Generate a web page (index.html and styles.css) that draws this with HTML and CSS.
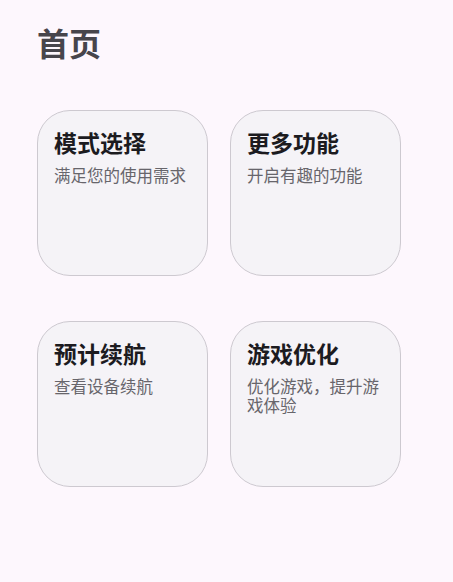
FILE: index.html
```html
<!DOCTYPE html>
<html lang="zh-CN">
<head>
    <meta charset="UTF-8">
    <meta name="viewport" content="width=device-width, initial-scale=1.0">
    <title>首页</title>
    <link rel="stylesheet" href="styles.css">
</head>
<body>
    <header>
        <h1>首页</h1>
    </header>
    <section class="tarjetas">
        <div class="tarjeta">
            <h3>模式选择</h3>
            <p>满足您的使用需求</p>
        </div>
        <div class="tarjeta">
            <h3>更多功能</h3>
            <p>开启有趣的功能</p>
        </div>
        <div class="tarjeta">
            <h3>预计续航</h3>
            <p>查看设备续航</p>
        </div>
        <div class="tarjeta">
            <h3>游戏优化</h3>
            <p>优化游戏，提升游戏体验</p>
        </div>
    </section>
</body>
</html>
```

FILE: styles.css
```css
body {
    font-family: "Noto Sans CJK SC", "Noto Sans", sans-serif;
    margin: 0;
    padding: 0;
    background-color: #fdf7fd;
}
header {
    padding: 22px 37px 0;
}
header h1 {
    margin: 0;
    font-size: 32px;
    line-height: 40px;
    font-weight: 700;
    color: #47454b;
}
.tarjetas {
    display: grid;
    grid-template-columns: 171px 171px;
    column-gap: 22px;
    row-gap: 45px;
    padding: 48px 37px 0;
}
.tarjeta {
    box-sizing: border-box;
    height: 166px;
    padding: 16px 16px 0;
    background-color: #f5f3f7;
    border: 1px solid #cdc9d0;
    border-radius: 33px;
}
.tarjeta h3 {
    margin: 0;
    font-size: 23px;
    line-height: 30px;
    font-weight: 700;
    color: #1c1b1f;
}
.tarjeta p {
    margin: 9px 0 0;
    font-size: 16.5px;
    line-height: 19px;
    color: #67656b;
}
```
